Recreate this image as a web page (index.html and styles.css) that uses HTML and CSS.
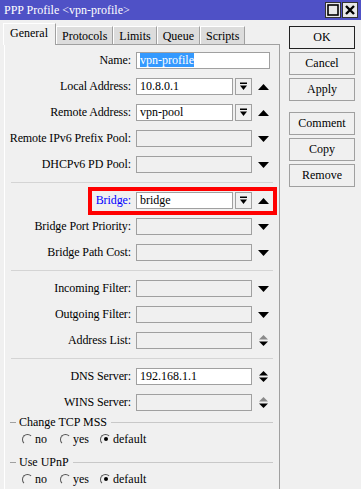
FILE: index.html
```html
<!DOCTYPE html>
<html>
<head>
    <title>PPP Profile</title>
    <link rel="stylesheet" href="styles.css">
</head>
<body>
    <div class="window">
        <div class="titlebar">
            <span class="title">PPP Profile &lt;vpn-profile&gt;</span>
            <div class="wbtns">
                <span class="wbtn"><svg width="12" height="12" viewBox="0 0 12 12"><rect x="1" y="1" width="10" height="10" fill="none" stroke="#000" stroke-width="1.6"/></svg></span>
                <span class="wbtn"><svg width="12" height="12" viewBox="0 0 12 12"><path d="M2 2L10 10M10 2L2 10" stroke="#000" stroke-width="2.4"/></svg></span>
            </div>
        </div>

        <div class="main">
            <div class="left">
                <div class="tabs">
                    <span class="tab active">General</span>
                    <span class="tab">Protocols</span>
                    <span class="tab">Limits</span>
                    <span class="tab">Queue</span>
                    <span class="tab">Scripts</span>
                </div>

                <div class="panel">
                    <div class="row">
                        <label>Name:</label>
                        <div class="input full on"><span class="sel">vpn-profile</span></div>
                    </div>
                    <div class="row">
                        <label>Local Address:</label>
                        <div class="input short on">10.8.0.1</div>
                        <span class="dd"><svg width="9" height="9" viewBox="0 0 9 9"><rect x="1" y="0.5" width="7" height="1.5"/><path d="M1 3.5H8L4.5 8Z"/></svg></span>
                        <span class="arrow"><svg width="11" height="6" viewBox="0 0 11 6"><path d="M0 6H11L5.5 0Z"/></svg></span>
                    </div>
                    <div class="row">
                        <label>Remote Address:</label>
                        <div class="input short on">vpn-pool</div>
                        <span class="dd"><svg width="9" height="9" viewBox="0 0 9 9"><rect x="1" y="0.5" width="7" height="1.5"/><path d="M1 3.5H8L4.5 8Z"/></svg></span>
                        <span class="arrow"><svg width="11" height="6" viewBox="0 0 11 6"><path d="M0 6H11L5.5 0Z"/></svg></span>
                    </div>
                    <div class="row">
                        <label>Remote IPv6 Prefix Pool:</label>
                        <div class="input mid"></div>
                        <span class="arrow"><svg width="11" height="6" viewBox="0 0 11 6"><path d="M0 0H11L5.5 6Z"/></svg></span>
                    </div>
                    <div class="row">
                        <label>DHCPv6 PD Pool:</label>
                        <div class="input mid"></div>
                        <span class="arrow"><svg width="11" height="6" viewBox="0 0 11 6"><path d="M0 0H11L5.5 6Z"/></svg></span>
                    </div>

                    <div class="sep"></div>

                    <div class="row marked">
                        <label class="blue">Bridge:</label>
                        <div class="input short on">bridge</div>
                        <span class="dd"><svg width="9" height="9" viewBox="0 0 9 9"><rect x="1" y="0.5" width="7" height="1.5"/><path d="M1 3.5H8L4.5 8Z"/></svg></span>
                        <span class="arrow"><svg width="11" height="6" viewBox="0 0 11 6"><path d="M0 6H11L5.5 0Z"/></svg></span>
                    </div>
                    <div class="row">
                        <label>Bridge Port Priority:</label>
                        <div class="input mid"></div>
                        <span class="arrow"><svg width="11" height="6" viewBox="0 0 11 6"><path d="M0 0H11L5.5 6Z"/></svg></span>
                    </div>
                    <div class="row">
                        <label>Bridge Path Cost:</label>
                        <div class="input mid"></div>
                        <span class="arrow"><svg width="11" height="6" viewBox="0 0 11 6"><path d="M0 0H11L5.5 6Z"/></svg></span>
                    </div>

                    <div class="sep"></div>

                    <div class="row">
                        <label>Incoming Filter:</label>
                        <div class="input mid"></div>
                        <span class="arrow"><svg width="11" height="6" viewBox="0 0 11 6"><path d="M0 0H11L5.5 6Z"/></svg></span>
                    </div>
                    <div class="row">
                        <label>Outgoing Filter:</label>
                        <div class="input mid"></div>
                        <span class="arrow"><svg width="11" height="6" viewBox="0 0 11 6"><path d="M0 0H11L5.5 6Z"/></svg></span>
                    </div>
                    <div class="row">
                        <label>Address List:</label>
                        <div class="input mid"></div>
                        <span class="arrow"><svg width="9" height="11" viewBox="0 0 9 11"><path d="M0 4.5H9L4.5 0Z" fill="#8a8a8a"/><path d="M0 6.5H9L4.5 11Z"/></svg></span>
                    </div>

                    <div class="sep"></div>

                    <div class="row">
                        <label>DNS Server:</label>
                        <div class="input mid on">192.168.1.1</div>
                        <span class="arrow"><svg width="9" height="11" viewBox="0 0 9 11"><path d="M0 4.5H9L4.5 0Z"/><path d="M0 6.5H9L4.5 11Z"/></svg></span>
                    </div>
                    <div class="row">
                        <label>WINS Server:</label>
                        <div class="input mid"></div>
                        <span class="arrow"><svg width="9" height="11" viewBox="0 0 9 11"><path d="M0 4.5H9L4.5 0Z" fill="#8a8a8a"/><path d="M0 6.5H9L4.5 11Z"/></svg></span>
                    </div>

                    <div class="group">
                        <div class="group-head"><span class="dash"></span><span>Change TCP MSS</span><span class="line"></span></div>
                        <div class="radios">
                            <span class="radio"><i class="dot"></i>no</span>
                            <span class="radio"><i class="dot"></i>yes</span>
                            <span class="radio"><i class="dot checked"></i>default</span>
                        </div>
                    </div>
                    <div class="group">
                        <div class="group-head"><span class="dash"></span><span>Use UPnP</span><span class="line"></span></div>
                        <div class="radios">
                            <span class="radio"><i class="dot"></i>no</span>
                            <span class="radio"><i class="dot"></i>yes</span>
                            <span class="radio"><i class="dot checked"></i>default</span>
                        </div>
                    </div>
                </div>
            </div>

            <div class="side">
                <button class="default">OK</button>
                <button>Cancel</button>
                <button>Apply</button>
                <button class="gap">Comment</button>
                <button>Copy</button>
                <button>Remove</button>
            </div>
        </div>
    </div>
</body>
</html>
```

FILE: styles.css
```css
body { margin: 0; background: #f0f0f0; font-family: "Liberation Serif", "DejaVu Serif", serif; font-size: 12px; color: #000; }
.window { width: 361px; height: 489px; overflow: hidden; }

.titlebar { height: 20px; background: #4f51c6; display: flex; align-items: center; justify-content: space-between; padding: 0 3px 0 4px; }
.title { color: #fff; font-size: 12px; }
.wbtns { display: flex; gap: 1px; }
.wbtn { width: 16px; height: 16px; background: #e8e8e8; border: 1px solid #333; box-sizing: border-box; display: flex; align-items: center; justify-content: center; }

.main { display: flex; }
.left { width: 280px; padding: 3px 0 0 4px; box-sizing: border-box; }
.tabs { display: flex; align-items: flex-end; height: 21px; }
.tab { height: 18px; line-height: 18px; padding: 0 5px; background: #dcdcdc; border-top: 1px solid #fff; border-left: 1px solid #fff; border-right: 1px solid #a0a0a0; box-sizing: border-box; }
.tab.active { height: 22px; line-height: 19px; background: #f0f0f0; margin: 0 0 -1px -1px; position: relative; padding: 0 7px 0 6px; }

.panel { border-top: 1px solid #a0a0a0; border-left: 1px solid #fff; border-right: 1px solid #a0a0a0; padding-top: 7px; height: 460px; box-sizing: border-box; }
.row { display: flex; align-items: center; height: 17px; margin-bottom: 9px; }
.row label { flex: none; width: 126px; margin-right: 5px; text-align: right; white-space: nowrap; letter-spacing: -0.1px; }
.row label.blue { color: #0000ff; }
.input { flex: none; height: 17px; box-sizing: border-box; border: 1px solid #a0a0a0; padding-left: 3px; line-height: 15px; overflow: hidden; white-space: nowrap; }
.input.on { background: #fff; }
.input.full { width: 134px; }
.input.short { width: 97px; }
.input.mid { width: 116px; }
.sel { background: #3399ff; color: #fff; }
.dd { flex: none; width: 17px; height: 17px; margin-left: 2px; box-sizing: border-box; border: 1px solid #a0a0a0; background: #f0f0f0; display: flex; align-items: center; justify-content: center; }
.arrow { flex: none; width: 22px; display: flex; justify-content: center; align-items: center; }
.marked { position: relative; }
.marked::before { content: ""; position: absolute; left: 83px; top: -5px; width: 189px; height: 28px; border: 4px solid #ff0000; box-sizing: border-box; }

.sep { height: 1px; background: #d4d4d4; margin: 0 6px 9px 6px; }

.group { margin-top: -5px; }
.group-head { display: flex; align-items: center; height: 14px; padding-left: 5px; padding-right: 6px; margin-bottom: 3px; }
.dash { width: 6px; height: 1px; background: #a0a0a0; margin-right: 3px; }
.line { flex: 1; height: 1px; background: #c8c8c8; margin-left: 4px; }
.radios { display: flex; height: 14px; align-items: center; padding-left: 17px; margin-bottom: 14px; }
.radio { display: flex; align-items: center; }
.radio:nth-child(1) { width: 38px; }
.radio:nth-child(2) { width: 40px; }
.dot { width: 11px; height: 11px; border-radius: 50%; box-sizing: border-box; border: 1px solid; border-color: #555 #f0f0f0 #f0f0f0 #555; margin-right: 2px; display: flex; align-items: center; justify-content: center; }
.dot.checked::after { content: ""; width: 4px; height: 4px; border-radius: 50%; background: #000; }

.side { width: 66px; margin-left: 9px; padding-top: 6px; display: flex; flex-direction: column; gap: 3px; }
.side button { height: 23px; font-family: "Liberation Serif", "DejaVu Serif", serif; font-size: 12px; background: #f0f0f0; border: 1px solid #a0a0a0; padding: 0; color: #000; }
.side button.default { border: 1px solid #222; }
.side button.gap { margin-top: 8px; }
```
